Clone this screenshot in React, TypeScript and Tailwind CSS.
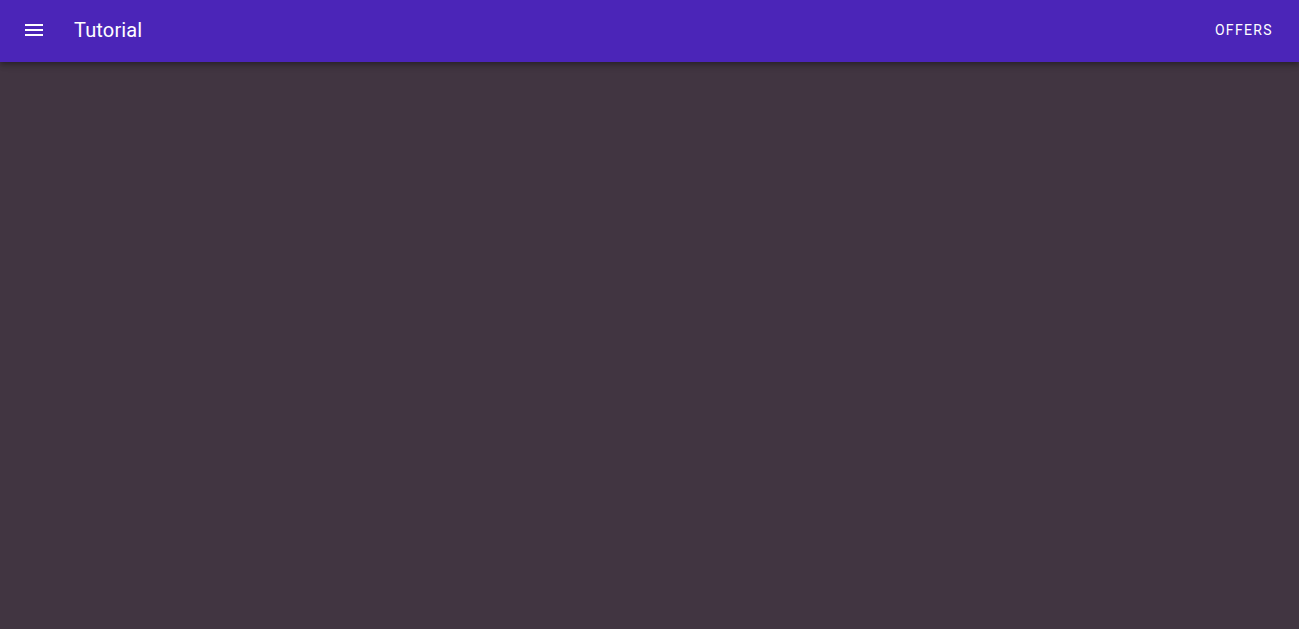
export default function App() {
  return (
    <div className="flex h-screen flex-col bg-[#413541] font-['Roboto',sans-serif]">
      <header className="relative z-10 flex h-[62px] items-center bg-[#4b25b8] pb-0.5 pl-[14px] pr-[18px] text-white shadow-[0_2px_4px_-1px_rgba(0,0,0,0.2),0_4px_5px_0_rgba(0,0,0,0.14),0_1px_10px_0_rgba(0,0,0,0.12)]">
        <button className="flex h-10 w-10 items-center justify-center rounded-full" aria-label="menu">
          <svg width="24" height="24" viewBox="0 0 24 24" fill="currentColor">
            <path d="M3 18h18v-2H3v2zm0-5h18v-2H3v2zm0-7v2h18V6H3z" />
          </svg>
        </button>
        <h1 className="ml-5 flex-1 text-[20px] font-normal tracking-[0.15px]">Tutorial</h1>
        <button className="px-2 py-1.5 text-[14px] font-normal uppercase tracking-[1.35px]">Offers</button>
      </header>
      <main className="flex-1" />
    </div>
  );
}
